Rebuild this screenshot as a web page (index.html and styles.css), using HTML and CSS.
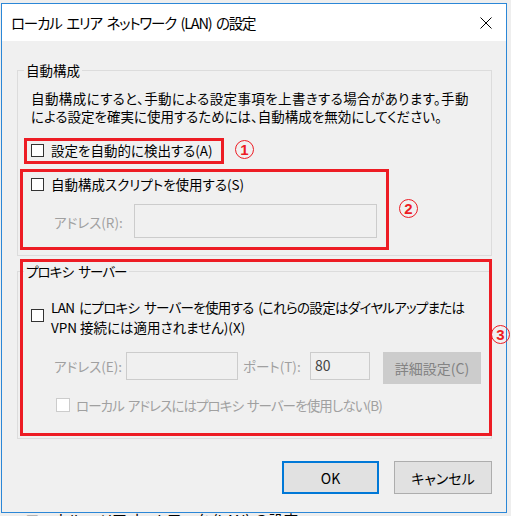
FILE: index.html
```html
<!DOCTYPE html>
<html lang="ja">
<head>
<meta charset="utf-8">
<title>ローカル エリア ネットワーク (LAN) の設定</title>
<link rel="stylesheet" href="styles.css">
</head>
<body>
<div class="window">
  <div class="titlebar">
    <span class="title">ローカル エリア ネットワーク (LAN) の設定</span>
    <svg class="close" width="12" height="12" viewBox="0 0 12 12"><path d="M0.5 0.5L11.5 11.5M11.5 0.5L0.5 11.5" stroke="#000" stroke-width="1" fill="none"/></svg>
  </div>
  <div class="content">
    <fieldset class="group g1">
      <legend>自動構成</legend>
      <div class="group-body">
        <p class="desc"><span class="wide-line">自動構成にすると、手動による設定事項を上書きする場合があります。手動</span><br>による設定を確実に使用するためには、自動構成を無効にしてください。</p>
        <div class="check row-a"><span class="box"></span><span class="lbl">設定を自動的に検出する(A)</span></div>
        <div class="check row-s"><span class="box"></span><span class="lbl">自動構成スクリプトを使用する(S)</span></div>
        <div class="addr-row">
          <span class="dis addr-lbl">アドレス(R):</span>
          <span class="input script-input"></span>
        </div>
      </div>
    </fieldset>
    <fieldset class="group g2">
      <legend class="tight">プロキシ サーバー</legend>
      <div class="group-body">
        <div class="check multi"><span class="box"></span><span class="lbl"><span class="tight-line">LAN にプロキシ サーバーを使用する (これらの設定はダイヤルアップまたは</span><br>VPN 接続には適用されません)(X)</span></div>
        <div class="proxy-row">
          <span class="dis addr-e">アドレス(E):</span>
          <span class="input addr-input"></span>
          <span class="dis port-lbl">ポート(T):</span>
          <span class="input port-input">80</span>
          <span class="btn-dis">詳細設定(C)</span>
        </div>
        <div class="check bypass"><span class="box box-dis"></span><span class="lbl dis compact">ローカル アドレスにはプロキシ サーバーを使用しない(B)</span></div>
      </div>
    </fieldset>
    <div class="actions">
      <span class="btn primary">OK</span>
      <span class="btn">キャンセル</span>
    </div>
  </div>
  <div class="mark box1"></div>
  <div class="mark box2"></div>
  <div class="mark box3"></div>
  <span class="num n1">1</span>
  <span class="num n2">2</span>
  <span class="num n3">3</span>
</div>
<div class="behind"><span>ローカル エリア ネットワーク (LAN) の設定</span></div>
</body>
</html>
```
FILE: styles.css
```css
* { box-sizing: border-box; }
html, body { margin: 0; padding: 0; }
body {
  width: 511px;
  height: 516px;
  overflow: hidden;
  background: #eeeeee;
  font-family: "Noto Sans CJK JP", sans-serif;
  font-feature-settings: "palt";
  color: #000;
  font-size: 13.5px;
}
.window {
  position: relative;
  margin: 3px 0 0 1px;
  width: 506px;
  height: 510px;
  border: 1px solid #2b87d7;
  background: #f0f0f0;
}
.titlebar {
  height: 37px;
  background: #fff;
  display: flex;
  align-items: center;
  justify-content: space-between;
  padding: 0 14px 0 9px;
}
.title {
  font-size: 14.5px;
  line-height: 18px;
  padding-top: 1px;
  letter-spacing: -1.2px;
  word-spacing: 2.5px;
}
.close { display: block; margin-top: 1px; }
.content {
  padding: 21px 14px 0 15px;
}
.group {
  margin: 0;
  padding: 0 0 17px 0;
  border: 1px solid #dcdcdc;
  min-width: 0;
}
.group legend {
  margin-left: 6px;
  padding: 0 2px;
  line-height: 17px;
  font-size: 13.5px;
}
.group legend.tight { letter-spacing: -0.9px; word-spacing: 3px; }
.group-body { padding-left: 13px; }
.g2 { margin-top: 7px; padding-bottom: 23px; }
.desc {
  margin: 10px 0 0 0;
  line-height: 18px;
}
.wide-line { letter-spacing: 0.4px; }
.tight-line { letter-spacing: -0.7px; word-spacing: 2.5px; }
.compact { letter-spacing: -0.9px; word-spacing: 1.5px; }
.check {
  display: flex;
  align-items: center;
  height: 20px;
  gap: 7px;
}
.box {
  flex: none;
  width: 13px;
  height: 13px;
  border: 1px solid #333;
  background: #fff;
}
.row-a { margin-top: 15px; }
.row-s { margin-top: 14px; }
.addr-row {
  margin-top: 10px;
  display: flex;
  align-items: center;
  padding-left: 23px;
}
.dis { color: #a0a0a0; }
.addr-lbl { width: 80px; padding-top: 2px; }
.input {
  display: block;
  border: 1px solid #cccccc;
  background: #f0f0f0;
}
.script-input { width: 243px; height: 34px; }
.check.multi {
  height: auto;
  align-items: flex-start;
  margin-top: 17px;
  line-height: 20px;
}
.check.multi .box { margin-top: 12px; }
.proxy-row {
  margin-top: 15px;
  display: flex;
  align-items: flex-start;
  padding-left: 23px;
}
.addr-e { width: 72px; line-height: 28px; }
.addr-input { width: 112px; height: 28px; }
.port-lbl { width: 67px; margin-left: 5px; line-height: 28px; }
.port-input { width: 60px; height: 28px; padding-left: 4px; line-height: 24px; color: #444; font-size: 14px; }
.btn-dis {
  margin-left: 13px;
  width: 98px;
  height: 32px;
  background: #cccccc;
  color: #838383;
  display: flex;
  align-items: center;
  justify-content: center;
  font-size: 14px;
}
.check.bypass {
  margin-top: 11px;
  padding-left: 25px;
  gap: 6px;
}
.box-dis { border-color: #cccccc; width: 14px; height: 14px; }
.actions {
  margin-top: 22px;
  display: flex;
  justify-content: flex-end;
  gap: 15px;
}
.btn {
  width: 98px;
  height: 33px;
  background: #e1e1e1;
  border: 1px solid #adadad;
  display: flex;
  align-items: center;
  justify-content: center;
  font-size: 14px;
}
.btn.primary { width: 97px; border: 2px solid #0078d7; }
.mark {
  position: absolute;
  border: 3px solid #ed1c24;
}
.box1 { left: 22px; top: 134px; width: 200px; height: 26px; }
.box2 { left: 18px; top: 165px; width: 369px; height: 81px; }
.box3 { left: 18px; top: 255px; width: 472px; height: 177px; }
.num {
  position: absolute;
  width: 19px;
  height: 19px;
  border: 1px solid #ed1c24;
  border-radius: 50%;
  color: #ed1c24;
  font-family: "Liberation Sans", sans-serif;
  font-weight: bold;
  font-size: 15px;
  line-height: 17px;
  text-align: center;
}
.n1 { left: 233px; top: 136px; }
.n2 { left: 397px; top: 195px; }
.n3 { left: 489px; top: 321px; }
.behind {
  height: 3px;
  overflow: hidden;
  padding-left: 25px;
  font-size: 15px;
  line-height: 15px;
}
.behind span { display: block; margin-top: -1px; }
```
